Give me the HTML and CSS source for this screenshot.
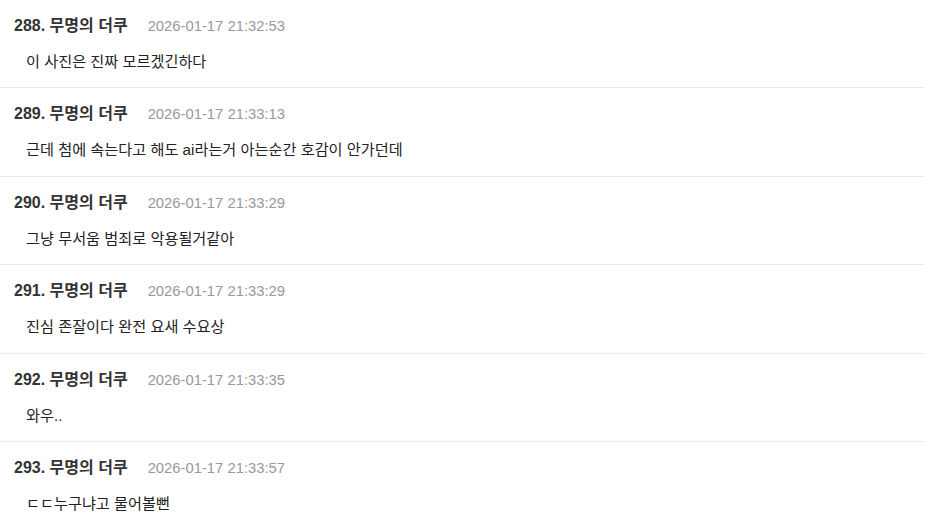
FILE: index.html
```html
<!DOCTYPE html>
<html lang="ko">
<head>
<meta charset="utf-8">
<link rel="stylesheet" href="styles.css">
</head>
<body>
<ul class="comments">
  <li class="comment">
    <div class="meta"><span class="author">288. 무명의 더쿠</span><span class="date">2026-01-17 21:32:53</span></div>
    <p class="text">이 사진은 진짜 모르겠긴하다</p>
  </li>
  <li class="comment">
    <div class="meta"><span class="author">289. 무명의 더쿠</span><span class="date">2026-01-17 21:33:13</span></div>
    <p class="text">근데 첨에 속는다고 해도 ai라는거 아는순간 호감이 안가던데</p>
  </li>
  <li class="comment">
    <div class="meta"><span class="author">290. 무명의 더쿠</span><span class="date">2026-01-17 21:33:29</span></div>
    <p class="text">그냥 무서움 범죄로 악용될거같아</p>
  </li>
  <li class="comment">
    <div class="meta"><span class="author">291. 무명의 더쿠</span><span class="date">2026-01-17 21:33:29</span></div>
    <p class="text">진심 존잘이다 완전 요새 수요상</p>
  </li>
  <li class="comment">
    <div class="meta"><span class="author">292. 무명의 더쿠</span><span class="date">2026-01-17 21:33:35</span></div>
    <p class="text">와우..</p>
  </li>
  <li class="comment">
    <div class="meta"><span class="author">293. 무명의 더쿠</span><span class="date">2026-01-17 21:33:57</span></div>
    <p class="text">ㄷㄷ누구냐고 물어볼뻔</p>
  </li>
</ul>
</body>
</html>
```
FILE: styles.css
```css
html, body {
  margin: 0;
  padding: 0;
  background: #fff;
}
body {
  font-family: "Liberation Sans", "Noto Sans CJK KR", sans-serif;
  color: #222;
}
.comments {
  list-style: none;
  margin: 0;
  padding: 0;
}
.comment {
  box-sizing: border-box;
  height: 88.6px;
  padding: 16px 14px 0;
  border-bottom: 1px solid #ececec;
}
.comment:first-child {
  height: 88px;
}
.meta {
  display: flex;
  align-items: baseline;
  gap: 20px;
  height: 20px;
  line-height: 20px;
}
.author {
  font-size: 16px;
  font-weight: 700;
  color: #333;
}
.date {
  font-size: 14.8px;
  color: #999;
}
.text {
  margin: 16px 0 0 12px;
  font-size: 15.2px;
  line-height: 20px;
  color: #222;
}
```
